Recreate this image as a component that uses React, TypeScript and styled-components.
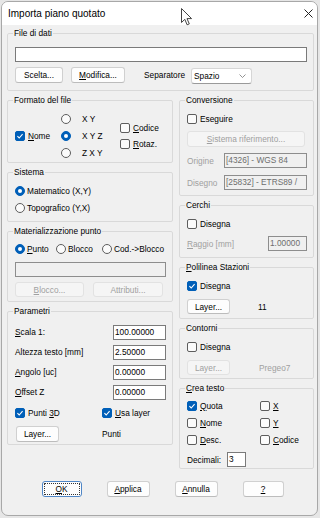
import React from "react";
import styled, { createGlobalStyle, css } from "styled-components";

const GlobalStyle = createGlobalStyle`
  html, body {
    margin: 0;
    padding: 0;
    background: #e6e6e6;
  }
  body {
    font-family: "Liberation Sans", Arial, sans-serif;
    font-size: 8.3px;
    color: #000;
  }
  * { box-sizing: border-box; }
`;

const Page = styled.div`
  position: relative;
  width: 320px;
  height: 518px;
  padding: 1px 0 0 1px;
`;

const Window = styled.div`
  width: 317px;
  height: 515px;
  border: 1px solid #a8a8a8;
  border-radius: 7px;
  background: #f0f0f0;
  overflow: hidden;
  display: flex;
  flex-direction: column;
`;

const TitleBar = styled.div`
  height: 23px;
  flex: none;
  background: #fff;
  display: flex;
  align-items: center;
  justify-content: space-between;
  padding: 0 4px 1px 6px;
  font-size: 10px;
`;

const Body = styled.div`
  flex: 1;
  display: flex;
  flex-direction: column;
  padding: 8px 3px 0 5px;
`;

const Group = styled.div<{ $h: number }>`
  height: ${(p) => p.$h}px;
  border: 1px solid #d9d9d9;
  border-radius: 2px;
  padding: 0 6px 0 7px;
  display: flex;
  flex-direction: column;
  flex: none;
`;

const Legend = styled.span`
  align-self: flex-start;
  margin: -6px 0 0 -2px;
  padding: 0 1px;
  line-height: 10px;
  height: 10px;
  background: #f0f0f0;
  white-space: nowrap;
`;

const Row = styled.div<{ $h?: number; $mt?: number; $between?: boolean }>`
  display: flex;
  align-items: center;
  height: ${(p) => p.$h ?? 16}px;
  margin-top: ${(p) => p.$mt ?? 0}px;
  justify-content: ${(p) => (p.$between ? "space-between" : "flex-start")};
  flex: none;
`;

const Columns = styled.div`
  display: grid;
  grid-template-columns: 166px 135px;
  column-gap: 6px;
  margin-top: 9px;
  align-items: start;
`;

const Column = styled.div`
  display: flex;
  flex-direction: column;
  gap: 9px;
`;

const U = styled.span`
  text-decoration: underline;
  text-underline-offset: 1px;
`;

const Text = styled.span<{ $w?: number; $ml?: number; $dim?: boolean }>`
  display: inline-block;
  flex: none;
  white-space: nowrap;
  width: ${(p) => (p.$w ? `${p.$w}px` : "auto")};
  margin-left: ${(p) => p.$ml ?? 0}px;
  color: ${(p) => (p.$dim ? "#a0a0a0" : "#000")};
`;

const Choice = styled.span<{ $w?: number; $gap?: number }>`
  display: inline-flex;
  align-items: center;
  gap: ${(p) => p.$gap ?? 3}px;
  width: ${(p) => (p.$w ? `${p.$w}px` : "auto")};
  flex: none;
  white-space: nowrap;
`;

const markBase = css<{ $on?: boolean }>`
  width: 10px;
  height: 10px;
  flex: none;
  border: 1px solid ${(p) => (p.$on ? "#005fb8" : "#5d5d5d")};
  background: ${(p) => (p.$on ? "#005fb8" : "#fbfbfb")};
  display: inline-flex;
  align-items: center;
  justify-content: center;
`;

const BoxMark = styled.span<{ $on?: boolean }>`
  ${markBase};
  border-radius: 2px;
`;

const RadioMark = styled.span<{ $on?: boolean }>`
  ${markBase};
  border-radius: 50%;
  &::after {
    content: "";
    width: 4px;
    height: 4px;
    border-radius: 50%;
    background: #fff;
    display: ${(p) => (p.$on ? "block" : "none")};
  }
`;

const Btn = styled.button<{ $w: number; $h?: number; $ml?: number }>`
  width: ${(p) => p.$w}px;
  height: ${(p) => p.$h ?? 16}px;
  margin: 0 0 0 ${(p) => p.$ml ?? 0}px;
  padding: 0;
  flex: none;
  font: inherit;
  color: #000;
  background: #fdfdfd;
  border: 1px solid #d0d0d0;
  border-bottom-color: #bcbcbc;
  border-radius: 3px;
  &:disabled {
    color: #a0a0a0;
    background: #f5f5f5;
    border-color: #e2e2e2;
  }
`;

const DefaultBtn = styled(Btn)`
  border: 1px solid #4f86c6;
  padding: 1px;
`;

const FocusRing = styled.span`
  display: flex;
  align-items: center;
  justify-content: center;
  height: 100%;
  border: 1px dotted #333;
  border-radius: 1px;
`;

const Field = styled.div<{ $w?: number; $ml?: number; $off?: boolean }>`
  width: ${(p) => (p.$w ? `${p.$w}px` : "auto")};
  height: 15px;
  margin-left: ${(p) => p.$ml ?? 0}px;
  flex: none;
  border: 1px solid #7a7a7a;
  background: #fff;
  padding: 0 1px;
  line-height: 13px;
  white-space: nowrap;
  overflow: hidden;
  ${(p) =>
    p.$off &&
    css`
      background: #f0f0f0;
      color: #6d6d6d;
      border-color: #8d8d8d;
    `}
`;

const Select = styled.div`
  width: 61px;
  height: 16px;
  margin-top: 2px;
  flex: none;
  display: flex;
  align-items: center;
  justify-content: space-between;
  padding: 0 5px 0 2px;
  background: #fff;
  border: 1px solid #d6d6d6;
  border-bottom-color: #9a9a9a;
  border-radius: 3px;
`;

const FormatGrid = styled.div`
  display: flex;
  margin-top: 5px;
  height: 51px;
`;

const FormatCol = styled.div<{ $w?: number }>`
  display: flex;
  flex-direction: column;
  justify-content: center;
  width: ${(p) => (p.$w ? `${p.$w}px` : "auto")};
  flex: none;
`;

const ButtonBar = styled.div`
  display: flex;
  justify-content: center;
  gap: 25px;
  margin-top: 12px;
  padding-left: 4px;
`;

const Cursor = styled.svg`
  position: absolute;
  left: 181px;
  top: 8px;
`;

const Check = ({ on, children, w }: { on?: boolean; children: React.ReactNode; w?: number }) => (
  <Choice $w={w}>
    <BoxMark $on={on}>
      {on && (
        <svg width="8" height="8" viewBox="0 0 8 8">
          <polyline points="1.4,4.2 3.2,6 6.6,2.2" fill="none" stroke="#fff" strokeWidth="1.1" />
        </svg>
      )}
    </BoxMark>
    <span>{children}</span>
  </Choice>
);

const Radio = ({ on, children, w, gap }: { on?: boolean; children?: React.ReactNode; w?: number; gap?: number }) => (
  <Choice $w={w} $gap={gap ?? 2}>
    <RadioMark $on={on} />
    {children && <span>{children}</span>}
  </Choice>
);

export default function App() {
  return (
    <Page>
      <GlobalStyle />
      <Window>
        <TitleBar>
          <span>Importa piano quotato</span>
          <svg width="9" height="9" viewBox="0 0 9 9">
            <path d="M0.5 0.5 L8.5 8.5 M8.5 0.5 L0.5 8.5" stroke="#222" strokeWidth="1" />
          </svg>
        </TitleBar>
        <Body>
          <Group $h={58}>
            <Legend>File di dati</Legend>
            <Field style={{ marginTop: 9 }} />
            <Row $mt={4} $h={17}>
              <Btn $w={48}>Scelta...</Btn>
              <Btn $w={54} $ml={8}>
                <U>M</U>odifica...
              </Btn>
              <Text $ml={19} $w={47}>
                Separatore
              </Text>
              <Select>
                <span>Spazio</span>
                <svg width="7" height="4" viewBox="0 0 7 4">
                  <polyline points="0.5,0.5 3.5,3.5 6.5,0.5" fill="none" stroke="#777" strokeWidth="0.8" />
                </svg>
              </Select>
            </Row>
          </Group>

          <Columns>
            <Column>
              <Group $h={63}>
                <Legend>Formato del file</Legend>
                <FormatGrid>
                  <FormatCol $w={46}>
                    <Check on>
                      <U>N</U>ome
                    </Check>
                  </FormatCol>
                  <FormatCol $w={59}>
                    {[
                      ["X Y", false],
                      ["X Y Z", true],
                      ["Z X Y", false],
                    ].map(([t, on]) => (
                      <Row key={t as string} $h={17}>
                        <Radio on={on as boolean} gap={11}>
                          {t}
                        </Radio>
                      </Row>
                    ))}
                  </FormatCol>
                  <FormatCol>
                    <Row $h={16}>
                      <Check>
                        <U>C</U>odice
                      </Check>
                    </Row>
                    <Row $h={16}>
                      <Check>
                        <U>R</U>otaz.
                      </Check>
                    </Row>
                  </FormatCol>
                </FormatGrid>
              </Group>

              <Group $h={50}>
                <Legend>Sistema</Legend>
                <Row $h={17} $mt={5}>
                  <Radio on>Matematico (X,Y)</Radio>
                </Row>
                <Row $h={17}>
                  <Radio>Topografico (Y,X)</Radio>
                </Row>
              </Group>

              <Group $h={71}>
                <Legend>Materializzazione punto</Legend>
                <Row $h={16} $mt={5}>
                  <Radio on w={41}>
                    <U>P</U>unto
                  </Radio>
                  <Radio w={46}>Blocco</Radio>
                  <Radio>Cod.-&gt;Blocco</Radio>
                </Row>
                <Field $off style={{ marginTop: 5 }} />
                <Row $h={15} $mt={5}>
                  <Btn $w={69} $h={15} disabled>
                    <U>B</U>locco...
                  </Btn>
                  <Btn $w={70} $h={15} $ml={9} disabled>
                    Attributi...
                  </Btn>
                </Row>
              </Group>

              <Group $h={134}>
                <Legend>Parametri</Legend>
                <Row $h={20} $mt={6} $between>
                  <Text>
                    <U>S</U>cala 1:
                  </Text>
                  <Field $w={53}>100.00000</Field>
                </Row>
                <Row $h={20} $between>
                  <Text>Altezza testo [mm]</Text>
                  <Field $w={53}>2.50000</Field>
                </Row>
                <Row $h={20} $between>
                  <Text>
                    <U>A</U>ngolo [uc]
                  </Text>
                  <Field $w={53}>0.00000</Field>
                </Row>
                <Row $h={20} $between>
                  <Text>
                    <U>O</U>ffset Z
                  </Text>
                  <Field $w={53}>0.00000</Field>
                </Row>
                <Row $h={22}>
                  <Check on w={87}>
                    Punti <U>3</U>D
                  </Check>
                  <Check on>
                    <U>U</U>sa layer
                  </Check>
                </Row>
                <Row $h={16} $mt={2}>
                  <Btn $w={43} $ml={1}>
                    Layer...
                  </Btn>
                  <Text $ml={43}>Punti</Text>
                </Row>
              </Group>
            </Column>

            <Column>
              <Group $h={96}>
                <Legend>Conversione</Legend>
                <Row $h={17} $mt={5}>
                  <Check>Eseguire</Check>
                </Row>
                <Row $h={16} $mt={4}>
                  <Btn $w={118} disabled>
                    <U>S</U>istema riferimento...
                  </Btn>
                </Row>
                <Row $h={15} $mt={6}>
                  <Text $w={37} $dim>
                    Origine
                  </Text>
                  <Field $w={83} $off>
                    [4326] - WGS 84
                  </Field>
                </Row>
                <Row $h={15} $mt={7}>
                  <Text $w={37} $dim>
                    Disegno
                  </Text>
                  <Field $w={83} $off>
                    [25832] - ETRS89 /
                  </Field>
                </Row>
              </Group>

              <Group $h={53}>
                <Legend>Cerchi</Legend>
                <Row $h={17} $mt={5}>
                  <Check>Disegna</Check>
                </Row>
                <Row $h={15} $mt={4} $between>
                  <Text $dim>
                    <U>R</U>aggio [mm]
                  </Text>
                  <Field $w={39} $off>
                    1.00000
                  </Field>
                </Row>
              </Group>

              <Group $h={52}>
                <Legend>
                  <U>P</U>olilinea Stazioni
                </Legend>
                <Row $h={17} $mt={5}>
                  <Check on>Disegna</Check>
                </Row>
                <Row $h={15} $mt={5}>
                  <Btn $w={43} $h={15}>
                    Layer...
                  </Btn>
                  <Text $ml={28}>11</Text>
                </Row>
              </Group>

              <Group $h={51}>
                <Legend>Contorni</Legend>
                <Row $h={17} $mt={5}>
                  <Check>Disegna</Check>
                </Row>
                <Row $h={15} $mt={5}>
                  <Btn $w={43} $h={15} disabled>
                    Layer...
                  </Btn>
                  <Text $ml={29} $dim>
                    Pregeo7
                  </Text>
                </Row>
              </Group>

              <Group $h={81}>
                <Legend>
                  <U>C</U>rea testo
                </Legend>
                <Row $h={17} $mt={4}>
                  <Check on w={73}>
                    <U>Q</U>uota
                  </Check>
                  <Check>
                    <U>X</U>
                  </Check>
                </Row>
                <Row $h={17}>
                  <Check w={73}>
                    <U>N</U>ome
                  </Check>
                  <Check>
                    <U>Y</U>
                  </Check>
                </Row>
                <Row $h={17}>
                  <Check w={73}>
                    <U>D</U>esc.
                  </Check>
                  <Check>
                    <U>C</U>odice
                  </Check>
                </Row>
                <Row $h={15} $mt={4}>
                  <Text $w={40}>Decimali:</Text>
                  <Field $w={19}>3</Field>
                </Row>
              </Group>
            </Column>
          </Columns>

          <ButtonBar>
            <DefaultBtn $w={40}>
              <FocusRing>
                <U>O</U>K
              </FocusRing>
            </DefaultBtn>
            <Btn $w={43}>
              <U>A</U>pplica
            </Btn>
            <Btn $w={43}>
              <U>A</U>nnulla
            </Btn>
            <Btn $w={41}>
              <U>?</U>
            </Btn>
          </ButtonBar>
        </Body>
      </Window>
      <Cursor width="12" height="18" viewBox="0 0 12 18">
        <path
          d="M0.5 0.5 L0.5 14.5 L3.8 11.3 L6.1 16.8 L8.3 15.9 L6 10.6 L10.6 10.6 Z"
          fill="#fff"
          stroke="#444"
          strokeWidth="1"
          strokeLinejoin="round"
        />
      </Cursor>
    </Page>
  );
}
